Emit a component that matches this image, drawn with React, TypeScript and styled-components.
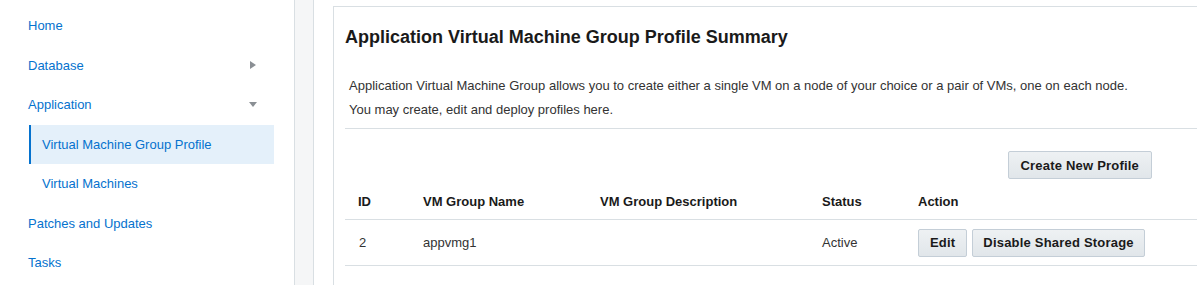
import React from 'react';
import styled, { createGlobalStyle } from 'styled-components';

const GlobalStyle = createGlobalStyle`
    html, body {
        margin: 0;
        padding: 0;
        background: #ffffff;
    }
    body {
        font-family: "Liberation Sans", Arial, sans-serif;
        font-size: 13px;
        color: #333333;
    }
`;

const Page = styled.div`
    display: flex;
    width: 1197px;
    height: 285px;
    overflow: hidden;
`;

const Sidebar = styled.nav`
    width: 295px;
    flex-shrink: 0;
    border-right: 1px solid #d9dfe3;
    padding: 6px 20px 0 0;
    box-sizing: border-box;
`;

const Gutter = styled.div`
    width: 18px;
    flex-shrink: 0;
    background: #f5f6f7;
    border-right: 1px solid #d9dfe3;
`;

const NavItem = styled.div<{ $sub?: boolean; $active?: boolean }>`
    display: flex;
    align-items: center;
    justify-content: space-between;
    height: 39.5px;
    box-sizing: border-box;
    margin-left: ${p => (p.$sub ? '29px' : '0')};
    padding-left: ${p => (p.$sub ? '11px' : '26px')};
    padding-right: 16px;
    width: ${p => (p.$sub ? '245px' : '274px')};
    color: #0572ce;
    font-size: 13px;
    background: ${p => (p.$active ? '#e4f0fa' : 'transparent')};
    border-left: ${p => (p.$active ? '2px solid #0572ce' : '2px solid transparent')};
`;

const Arrow = styled.span<{ $down?: boolean }>`
    width: 0;
    height: 0;
    ${p =>
        p.$down
            ? `border-left: 4.5px solid transparent;
               border-right: 4.5px solid transparent;
               border-top: 5px solid #8a8f94;
               margin-right: 1px;`
            : `border-top: 4px solid transparent;
               border-bottom: 4px solid transparent;
               border-left: 6px solid #8a8f94;
               margin-right: 2px;`}
`;

const Main = styled.main`
    flex: 1;
    padding: 6px 0 0 19px;
    min-width: 0;
`;

const Panel = styled.section`
    border-left: 1px solid #d9dfe3;
    border-top: 1px solid #d9dfe3;
    padding: 0 0 0 11px;
    height: 100%;
`;

const Title = styled.h1`
    margin: 0;
    padding: 20px 0 0 0;
    font-size: 18px;
    font-weight: bold;
    color: #1a1a1a;
    line-height: 20px;
`;

const Description = styled.div`
    padding: 27px 0 6px 4px;
    border-bottom: 1px solid #d9dfe3;
    line-height: 24px;
    color: #333333;
    font-size: 13px;
`;

const Toolbar = styled.div`
    display: flex;
    justify-content: flex-end;
    padding: 22px 45px 0 0;
    height: 50px;
    box-sizing: border-box;
`;

const Button = styled.button<{ $px?: number }>`
    font-family: "Liberation Sans", Arial, sans-serif;
    font-size: 13px;
    font-weight: bold;
    letter-spacing: 0.2px;
    color: #1a1a1a;
    background: linear-gradient(#eef1f3, #e1e6ea);
    border: 1px solid #c4ced7;
    border-radius: 2px;
    height: 28px;
    padding: 0 ${p => p.$px ?? 11}px;
    margin: 0;
    cursor: pointer;
`;

const Table = styled.table`
    border-collapse: collapse;
    width: 100%;
    margin-top: 4px;
`;

const Th = styled.th<{ $w?: number; $pl?: number }>`
    text-align: left;
    font-weight: bold;
    color: #1a1a1a;
    font-size: 13px;
    height: 36px;
    padding: 0 0 0 ${p => p.$pl ?? 0}px;
    width: ${p => (p.$w ? `${p.$w}px` : 'auto')};
    border-bottom: 1px solid #d9dfe3;
    vertical-align: middle;
`;

const Td = styled.td<{ $pl?: number }>`
    color: #333333;
    font-size: 13px;
    height: 45px;
    padding: 0 0 0 ${p => p.$pl ?? 0}px;
    border-bottom: 1px solid #d9dfe3;
    vertical-align: middle;
`;

const Actions = styled.div`
    display: flex;
    gap: 5px;
`;

const navItems = [
    { label: 'Home' },
    { label: 'Database', arrow: 'right' },
    { label: 'Application', arrow: 'down' },
    { label: 'Virtual Machine Group Profile', sub: true, active: true },
    { label: 'Virtual Machines', sub: true },
    { label: 'Patches and Updates' },
    { label: 'Tasks' },
];

const App = () => {
    return (
        <>
            <GlobalStyle />
            <Page>
                <Sidebar>
                    {navItems.map(item => (
                        <NavItem key={item.label} $sub={item.sub} $active={item.active}>
                            <span>{item.label}</span>
                            {item.arrow && <Arrow $down={item.arrow === 'down'} />}
                        </NavItem>
                    ))}
                </Sidebar>
                <Gutter />
                <Main>
                    <Panel>
                        <Title>Application Virtual Machine Group Profile Summary</Title>
                        <Description>
                            Application Virtual Machine Group allows you to create either a single VM on a node of your choice or a pair of VMs, one on each node.
                            <br />
                            You may create, edit and deploy profiles here.
                        </Description>
                        <Toolbar>
                            <Button $px={12}>Create New Profile</Button>
                        </Toolbar>
                        <Table>
                            <thead>
                                <tr>
                                    <Th $w={65} $pl={13}>ID</Th>
                                    <Th $w={177}>VM Group Name</Th>
                                    <Th $w={222}>VM Group Description</Th>
                                    <Th $w={96}>Status</Th>
                                    <Th>Action</Th>
                                </tr>
                            </thead>
                            <tbody>
                                <tr>
                                    <Td $pl={14}>2</Td>
                                    <Td>appvmg1</Td>
                                    <Td></Td>
                                    <Td>Active</Td>
                                    <Td>
                                        <Actions>
                                            <Button>Edit</Button>
                                            <Button $px={10}>Disable Shared Storage</Button>
                                        </Actions>
                                    </Td>
                                </tr>
                            </tbody>
                        </Table>
                    </Panel>
                </Main>
            </Page>
        </>
    );
};

export default App;
